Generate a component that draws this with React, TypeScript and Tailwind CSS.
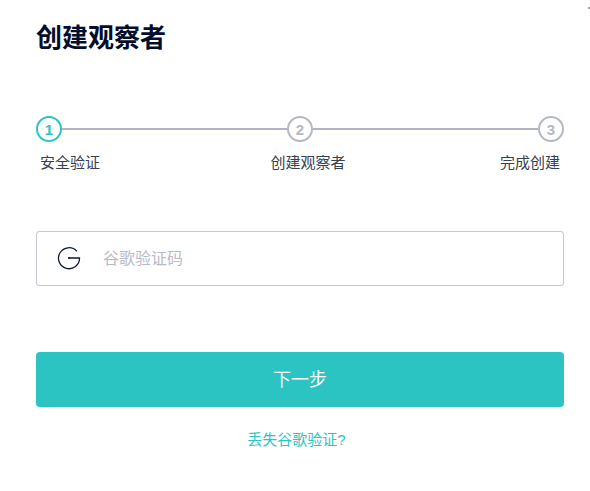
import { useState } from "react";
import type { FormEvent } from "react";
import clsx from "clsx";

const steps = ["安全验证", "创建观察者", "完成创建"];

function GoogleIcon() {
  return (
    <svg className="h-6 w-6 shrink-0" viewBox="0 0 24 24" fill="none" stroke="#0c1836" strokeWidth="1.3" aria-hidden="true">
      <path d="M19.8 4.2A10.5 10.5 0 1 0 22.5 11H12" />
      <circle cx="12" cy="11" r="1.1" fill="#0c1836" stroke="none" />
    </svg>
  );
}

function Steps({ current }: { current: number }) {
  return (
    <div>
      <div className="flex items-center">
        {steps.map((label, i) => (
          <div key={label} className={clsx("flex items-center", i > 0 && "flex-1")}>
            {i > 0 && <div className="h-0.5 flex-1 bg-[#b0b3c3]" />}
            <span
              className={clsx(
                "flex h-[26px] w-[26px] items-center justify-center rounded-full border-2 text-[15px] font-bold leading-none",
                i === current ? "border-[#2bc4c3] text-[#2bc4c3]" : "border-[#b5b8c4] text-[#b5b8c4]"
              )}
            >
              {i + 1}
            </span>
          </div>
        ))}
      </div>
      <div className="mt-[9px] grid grid-cols-[1fr_auto_1fr] px-1 text-[15px] leading-6 text-[#354052]">
        <span>{steps[0]}</span>
        <span className="pl-4">{steps[1]}</span>
        <span className="text-right">{steps[2]}</span>
      </div>
    </div>
  );
}

export default function App() {
  const [code, setCode] = useState("");

  const handleSubmit = (e: FormEvent) => {
    e.preventDefault();
  };

  return (
    <main className="relative overflow-hidden bg-white pl-[36px] pr-[26px] pt-5 pb-10 font-['Liberation_Sans','Noto_Sans_CJK_SC',sans-serif]">
      {/* Tip of the close mark, cut off by the dialog edge */}
      <span className="absolute top-[7px] right-0 h-0.5 w-0.5 bg-[#a3a5b8]" aria-hidden="true" />

      <h1 className="text-[26px] font-bold leading-9 text-[#020e2c]">创建观察者</h1>

      <div className="mt-[60px]">
        <Steps current={0} />
      </div>

      <form onSubmit={handleSubmit} className="mt-14">
        <label className="flex h-[55px] items-center gap-[22px] rounded-[3px] border border-[#c5c5d3] px-5">
          <GoogleIcon />
          <input
            type="text"
            inputMode="numeric"
            aria-label="谷歌验证码"
            placeholder="谷歌验证码"
            value={code}
            onChange={(e) => setCode(e.target.value)}
            className="min-w-0 flex-1 bg-transparent text-base text-[#354052] outline-none placeholder:text-[#b9bac7]"
          />
        </label>

        <button type="submit" className="mt-[66px] h-[55px] w-full rounded bg-[#2bc4c3] text-lg text-white">
          下一步
        </button>
      </form>

      <div className="mt-[21px] pr-[7px] text-center">
        <a href="#lost" className="text-[15px] leading-6 text-[#2bc4c3]">
          丢失谷歌验证?
        </a>
      </div>
    </main>
  );
}
